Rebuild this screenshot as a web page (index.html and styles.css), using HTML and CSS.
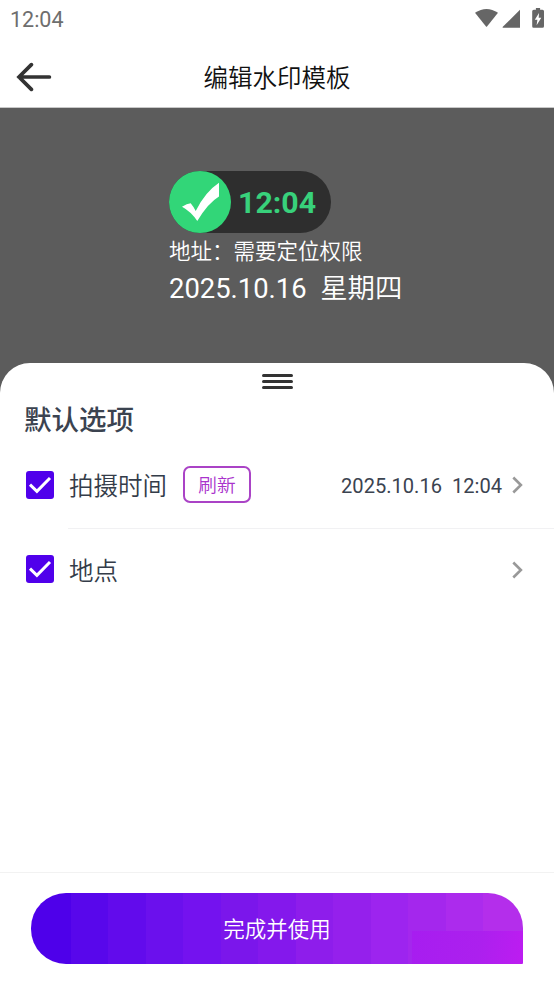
FILE: index.html
```html
<!DOCTYPE html>
<html lang="zh-CN">
<head>
<meta charset="utf-8">
<title>编辑水印模板</title>
<link rel="stylesheet" href="styles.css">
</head>
<body>
<div class="screen">
  <div class="status">
    <span class="clock">12:04</span>
    <svg class="status-icons" width="72" height="24" viewBox="0 0 72 24" fill="#666">
      <path d="M2 4.800Q13.500-2.800 25 4.800L14 18.400Q13.500 19 13 18.400Z"/>
      <path d="M47 1.800V19.800H30Q29.200 19.500 29.800 18.800Z"/>
      <path d="M60.800 1.700H62.900V0H67.100V1.700H69.500Q71 1.700 71 3.200V18.300Q71 19.800 69.500 19.800H60.500Q59.200 19.800 59.200 18.300V3.200Q59.200 1.700 60.800 1.700Z"/>
      <path fill="#fff" d="M66 5 61.800 11.800H64.400L63.600 17.300 68.300 9.800H65.700Z"/>
    </svg>
  </div>
  <header class="titlebar">
    <svg class="back" width="36" height="30" viewBox="0 0 36 30" fill="none" stroke="#333" stroke-width="3.700">
      <path d="M33.400 15H3M15.400 2.600 3 15 15.400 27.400" stroke-linecap="round" stroke-linejoin="miter"/>
    </svg>
    <h1>编辑水印模板</h1>
  </header>
  <section class="preview">
    <div class="pill">
      <svg width="62" height="62" viewBox="0 0 62 62">
        <circle cx="31" cy="31" r="31" fill="#32d678"/>
        <path fill="#fff" d="M13 35.700Q18 32.800 21.700 32.300Q24 35 26.700 40Q36 21 50 11.700V25.500Q39 32 28.300 50Q22 40.500 13 35.700Z"/>
      </svg>
      <span>12:04</span>
    </div>
    <div class="address">地址：需要定位权限</div>
    <div class="date">2025.10.16  <span>星期四</span></div>
  </section>
  <main class="sheet">
    <div class="handle"><i></i><i></i><i></i></div>
    <h2>默认选项</h2>
    <div class="row">
      <svg class="check" width="28" height="28" viewBox="0 0 28 28"><rect width="28" height="28" rx="3" fill="#5000eb"/><path d="M4 13.700 10.900 20.300 24 7" fill="none" stroke="#fff" stroke-width="3"/></svg>
      <div class="cell lined">
        <span class="label">拍摄时间</span>
        <button class="refresh">刷新</button>
        <span class="value">2025.10.16  12:04</span>
        <svg class="chevron" width="11" height="18" viewBox="0 0 11 18"><path d="M1.300 1.500 8.900 9 1.300 16.500"/></svg>
      </div>
    </div>
    <div class="row short">
      <svg class="check" width="28" height="28" viewBox="0 0 28 28"><rect width="28" height="28" rx="3" fill="#5000eb"/><path d="M4 13.700 10.900 20.300 24 7" fill="none" stroke="#fff" stroke-width="3"/></svg>
      <div class="cell">
        <span class="label">地点</span>
        <svg class="chevron" width="11" height="18" viewBox="0 0 11 18"><path d="M1.300 1.500 8.900 9 1.300 16.500"/></svg>
      </div>
    </div>
  </main>
  <footer class="footer">
    <button class="submit">完成并使用</button>
  </footer>
</div>
</body>
</html>
```
FILE: styles.css
```css
* { box-sizing: border-box; }
body {
  margin: 0;
  font-family: Roboto, "Noto Sans CJK SC", sans-serif;
  background: #fff;
}
h1, h2 { margin: 0; }
button { font-family: inherit; padding: 0; }
.screen {
  display: flex;
  flex-direction: column;
  width: 554px;
  height: 984px;
  overflow: hidden;
}
.status {
  display: flex;
  justify-content: space-between;
  height: 47px;
  padding: 7px 9px 0 10px;
}
.clock {
  font-size: 21.5px;
  line-height: 25px;
  font-weight: 450;
  color: #6e6e6e;
}
.status-icons { margin-top: 1px; }
.titlebar {
  display: grid;
  grid-template-columns: 100px 1fr 100px;
  align-items: center;
  height: 61px;
  border-bottom: 1px solid #c8c8c8;
}
.back { margin-left: 16px; }
h1 {
  padding-top: 4px;
  text-align: center;
  font-size: 24.5px;
  font-weight: 350;
  line-height: 36px;
  color: #111;
}
.preview {
  height: 285px;
  padding: 63px 0 0 169px;
  background: #5c5c5c;
  color: #fff;
}
.pill {
  display: flex;
  align-items: center;
  width: 162px;
  height: 62px;
  border-radius: 31px;
  background: #2e2e2e;
}
.pill span {
  margin: 2px 0 0 7px;
  font-size: 30.3px;
  line-height: 36px;
  font-weight: 700;
  color: #38d17b;
}
.address {
  padding-top: 1px;
  font-size: 21.5px;
  line-height: 36px;
  font-weight: 350;
}
.date {
  font-size: 27.4px;
  line-height: 38px;
  white-space: pre;
}
.date span { font-weight: 350; }
.sheet {
  flex: 1;
  margin-top: -30px;
  border-radius: 30px 30px 0 0;
  background: #fff;
  color: #3b4350;
}
.handle {
  display: grid;
  gap: 3px;
  width: 31px;
  margin: 11px auto 0;
}
.handle i {
  height: 3px;
  border-radius: 2px;
  background: #333;
}
h2 {
  margin: 12px 0 0 24px;
  font-size: 27.5px;
  line-height: 40px;
  font-weight: 500;
}
.row {
  display: flex;
  align-items: center;
  height: 88px;
  padding-left: 26px;
}
.row.short { height: 81px; }
.check { margin-top: -1px; }
.cell {
  display: flex;
  align-items: center;
  align-self: stretch;
  flex: 1;
  margin-left: 14px;
  padding: 0 31px 0 1px;
}
.lined { border-bottom: 1px solid #f1f1f3; }
.label {
  padding-top: 4px;
  font-size: 24.5px;
  line-height: 36px;
  font-weight: 350;
  color: #343c49;
}
.refresh {
  width: 68px;
  height: 37px;
  margin-left: 16px;
  padding-top: 2px;
  border: 2px solid #aa43c6;
  border-radius: 7px;
  background: #fff;
  font-size: 18.7px;
  line-height: 30px;
  font-weight: 350;
  color: #a932cc;
}
.value {
  margin-left: auto;
  padding-top: 2px;
  font-size: 20.1px;
  white-space: pre;
}
.chevron {
  margin-left: 10px;
  fill: none;
  stroke: #999;
  stroke-width: 2.6;
}
.label + .chevron { margin-left: auto; }
.footer {
  height: 112px;
  padding: 20px 31px;
  border-top: 1px solid #f2f2f2;
}
.submit {
  display: block;
  width: 492px;
  height: 71px;
  border: 0;
  padding-top: 2px;
  border-radius: 35px 35px 1px 35px;
  font-size: 21.5px;
  line-height: 32px;
  font-weight: 350;
  color: #fff;
  background:
    linear-gradient(100deg, #a71df0, #ac20ee 60%, #bd1cf1) right bottom / 111px 33px no-repeat,
    linear-gradient(90deg,
      #4e00ea 0 40px, #5807eb 40px 77px, #620bec 77px 115px,
      #6b10ed 115px 152px, #7412ef 152px 190px, #7b16eb 190px 227px,
      #8418ec 227px 265px, #8e1deb 265px 302px, #9520ec 302px 340px,
      #9d24ef 340px 377px, #a427ed 377px 415px, #ac2bed 415px 452px,
      #b42eeb 452px);
}
```
